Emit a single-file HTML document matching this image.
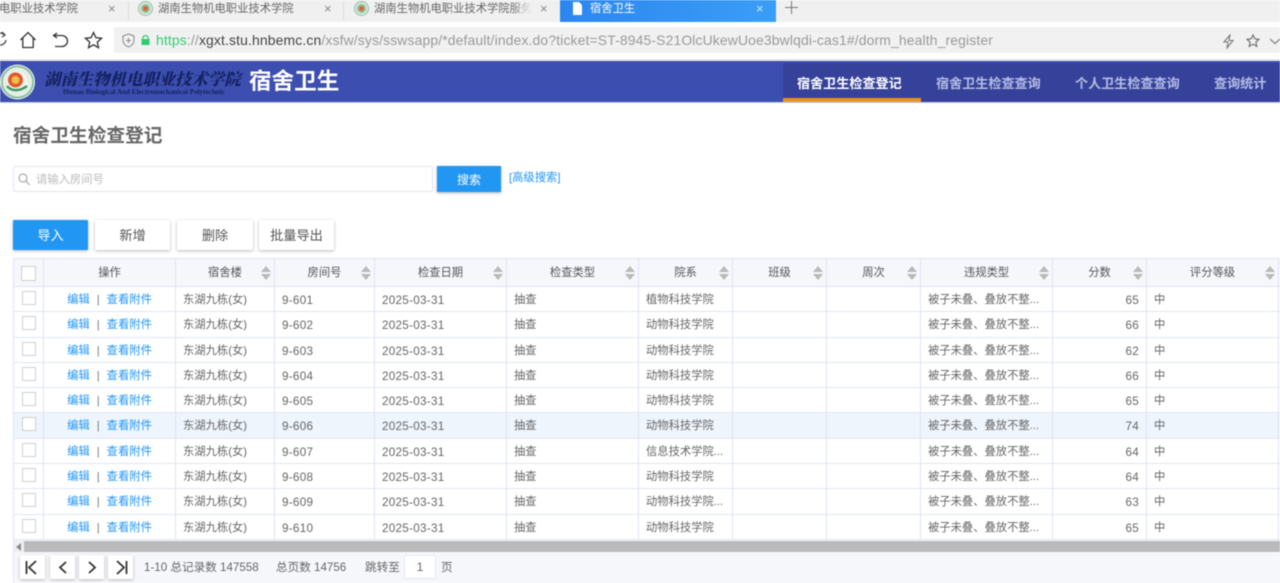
<!DOCTYPE html>
<html lang="zh"><head><meta charset="utf-8"><title>宿舍卫生</title>
<style>
*{box-sizing:border-box}
html,body{margin:0;padding:0;width:1280px;height:583px;overflow:hidden;background:#fff}
body{font-family:"Liberation Sans","Noto Sans CJK SC",sans-serif;color:#555;position:relative}
#w{position:absolute;left:0;top:0;width:1280px;height:583px;overflow:hidden;filter:blur(.4px)}
.a{position:absolute;white-space:nowrap}
.tabtxt{font-size:11.3px;color:#666;top:2px;line-height:14px}
.x{font-size:13px;color:#888;top:1px;line-height:15px}
.sep{width:1px;height:18px;top:2px;background:#dcdcdc}
.fav{width:15px;height:15px;top:1px;border-radius:50%;background:radial-gradient(circle,#e0603a 0 2px,#8cc5a5 3px 4px,#dbe8dc 5px 6px,#8fbf9f 7px)}
.nav{top:76px;font-size:13.1px;font-weight:700;color:#b4bde6;line-height:16px}
.btn{height:30px;top:220px;background:#fff;text-align:center;font-size:13.2px;line-height:31px;color:#555;box-shadow:0 1px 3px rgba(0,0,0,.28);border-radius:1px}
.row{position:absolute;left:13px;width:1267px;display:grid;grid-template-columns:31px 132px 99px 100px 132px 132px 94px 94px 94px 132px 94px 132px 1px;border-bottom:1px solid #e1e4f5;font-size:11.3px;color:#666}
.row>div{border-right:1px solid #dfe2f5;padding-left:7px;white-space:nowrap;overflow:hidden;line-height:25px}
.row>div:first-child{padding:0;position:relative;border-left:1px solid #dfe2f5}
.row>div:last-child{border:0;padding:0}
.row .n{text-align:right;padding:0 7px 0 0}
.row .d{font-size:11.7px;letter-spacing:.27px}
.row .o{text-align:center;padding:0;color:#2196f3}
.row .o i{font-style:normal;color:#777;margin:0 7px}
.cb{position:absolute;left:8px;top:4px;width:14px;height:14px;border:1px solid #cfcfcf;background:#fff}
.hd{top:258px;height:29px;border-top:1px solid #dfe2f5;background:#f6f7fb;color:#555;border-bottom:1px solid #dfe2f5}
.hd>div{text-align:center;padding:0;line-height:29px;position:relative}
.hd>div b{font-weight:400}
.sort:before{content:"";position:absolute;right:3px;top:7px;border:5px solid transparent;border-top:0;border-bottom:6px solid #b9b9b9}
.sort:after{content:"";position:absolute;right:3px;top:15px;border:5px solid transparent;border-bottom:0;border-top:6px solid #b9b9b9}
.pg{top:555px;width:25px;height:24px;background:#fff;box-shadow:0 1px 3px rgba(0,0,0,.25);border-radius:1px}
.pg svg{position:absolute;left:0;top:0}
.ft{top:560px;font-size:11.6px;line-height:16px;color:#666}
</style></head><body><div id="w">

<!-- tab strip -->
<div class="a" style="left:0;top:0;width:1280px;height:22px;background:#f0f0f0"></div>
<div class="a tabtxt" style="left:-1px">电职业技术学院</div><div class="a x" style="left:108px">×</div><div class="a sep" style="left:128px"></div>
<div class="a fav" style="left:138px"></div><div class="a tabtxt" style="left:158px">湖南生物机电职业技术学院</div><div class="a x" style="left:324px">×</div><div class="a sep" style="left:343px"></div>
<div class="a fav" style="left:354px"></div><div class="a tabtxt" style="left:374px;width:157px;overflow:hidden">湖南生物机电职业技术学院服务</div><div class="a" style="left:511px;top:0;width:21px;height:20px;background:linear-gradient(90deg,rgba(240,240,240,0),#f0f0f0)"></div><div class="a x" style="left:540px">×</div>
<div class="a" style="left:560px;top:0;width:216px;height:22px;background:linear-gradient(90deg,#2c86f0,#3a9ef6)"></div>
<svg class="a" style="left:572px;top:2px" width="11" height="13" viewBox="0 0 11 13"><path d="M1 0h6l3 3v10H1z" fill="#fff"/></svg>
<div class="a tabtxt" style="left:590px;color:#fff">宿舍卫生</div><div class="a x" style="left:756px;color:#cfe4fb">×</div>
<svg class="a" style="left:785px;top:1px" width="13" height="13" viewBox="0 0 13 13"><path d="M6.500 0v13M0 6.500h13" stroke="#777" stroke-width="1" fill="none"/></svg>

<!-- address row -->
<div class="a" style="left:0;top:22px;width:1280px;height:5px;background:#fff"></div>
<svg class="a" style="left:-7px;top:31px" width="14" height="16" viewBox="0 0 14 16"><path d="M11.500 4A6 6 0 1 0 13 9" fill="none" stroke="#444" stroke-width="1.300"/><path d="M9 1l3 3-3 2" fill="none" stroke="#444" stroke-width="1.300"/></svg>
<svg class="a" style="left:19px;top:31px" width="18" height="18" viewBox="0 0 18 18"><path d="M1.500 9L9 1.500 16.500 9M3.800 7v9.500h10.400V7" fill="none" stroke="#333" stroke-width="1.300"/></svg>
<svg class="a" style="left:52px;top:32px" width="18" height="16" viewBox="0 0 18 16"><path d="M5 1L1.500 3.500 5 6M1.500 3.500H10a5.500 5.500 0 0 1 0 11H3" fill="none" stroke="#333" stroke-width="1.300"/></svg>
<svg class="a" style="left:84px;top:31px" width="19" height="18" viewBox="0 0 19 18"><path d="M9.500 1.500l2.400 5.200 5.600.6-4.200 3.800 1.200 5.600-5-2.900-5 2.900 1.200-5.600-4.200-3.800 5.600-.6z" fill="none" stroke="#333" stroke-width="1.300"/></svg>
<div class="a" style="left:114px;top:27px;width:1166px;height:26px;background:#f1f1f1"></div>
<svg class="a" style="left:122px;top:33px" width="13" height="15" viewBox="0 0 13 15"><path d="M6.500 1L12 3v4.500c0 3-2.500 5.300-5.500 6.500C3.500 12.800 1 10.500 1 7.500V3z" fill="none" stroke="#888" stroke-width="1"/><path d="M6.500 5v5M4 7.500h5" stroke="#888" stroke-width="1"/></svg>
<svg class="a" style="left:141px;top:35px" width="9" height="10" viewBox="0 0 9 10"><path d="M2 4V3a2.500 2.500 0 0 1 5 0v1" fill="none" stroke="#2ecc71" stroke-width="1.200"/><rect x="0.500" y="4" width="8" height="6" fill="#2ecc71"/></svg>
<div class="a" style="left:156px;top:32px;font-size:13.9px;line-height:17px;color:#999;letter-spacing:.153px"><span style="color:#2ecc71">https</span>://<span style="color:#444">xgxt.stu.hnbemc.cn</span>/xsfw/sys/sswsapp/*default/index.do?ticket=ST-8945-S21OlcUkewUoe3bwlqdi-cas1#/dorm_health_register</div>
<svg class="a" style="left:1222px;top:34px" width="13" height="15" viewBox="0 0 13 15"><path d="M8 1L2 8h4l-1 6 6-7.500H7z" fill="none" stroke="#777" stroke-width="1.100"/></svg>
<svg class="a" style="left:1246px;top:34px" width="14" height="14" viewBox="0 0 14 14"><path d="M7 1l1.800 3.800 4.200.5-3.100 2.800.9 4.200L7 10.200l-3.800 2.100.9-4.200L1 5.300l4.200-.5z" fill="none" stroke="#666" stroke-width="1.100"/></svg>
<svg class="a" style="left:1270px;top:38px" width="10" height="7" viewBox="0 0 10 7"><path d="M0 1l5 4.500L10 1" fill="none" stroke="#777" stroke-width="1.100"/></svg>
<div class="a" style="left:0;top:59px;width:1280px;height:2px;background:#e6e6e6"></div>

<!-- app header -->
<div class="a" style="left:0;top:61px;width:1280px;height:41px;background:#3c4fb1"></div>
<div class="a" style="left:783px;top:63px;width:497px;height:39px;background:#364299"></div>
<div class="a" style="left:783px;top:98px;width:138px;height:4px;background:#e8951f"></div>
<div class="a" style="left:0;top:102px;width:1280px;height:1px;background:#c5cbe9"></div>
<svg class="a" style="left:0;top:64px" width="36" height="36" viewBox="0 0 36 36"><circle cx="17.500" cy="18" r="17.500" fill="#e4efe6"/><circle cx="17.500" cy="18" r="15.500" fill="none" stroke="#7fb596" stroke-width="1.500"/><circle cx="17.500" cy="18" r="10" fill="#f4f6ee"/><circle cx="15.500" cy="16" r="7.500" fill="#e2572f"/><circle cx="15.500" cy="16" r="4" fill="#e9c24a"/><path d="M7 22c4 5 12 6 20 0" fill="none" stroke="#3f9b63" stroke-width="2.500"/></svg>
<div class="a" style="left:44px;top:68px;font-family:'Noto Serif CJK SC',serif;font-weight:900;font-style:italic;font-size:16.400px;line-height:20px;color:#14225f">湖南生物机电职业技术学院</div>
<div class="a" style="left:63px;top:88px;font-family:'Liberation Serif',serif;font-weight:700;font-size:7.100px;line-height:8px;color:#14225f">Hunan Biological And Electromechanical Polytechnic</div>
<div class="a" style="left:249px;top:67px;font-size:22.600px;font-weight:700;line-height:29px;color:#fff">宿舍卫生</div>
<div class="a nav" style="left:797px;color:#fff">宿舍卫生检查登记</div>
<div class="a nav" style="left:936px">宿舍卫生检查查询</div>
<div class="a nav" style="left:1075px">个人卫生检查查询</div>
<div class="a nav" style="left:1214px">查询统计</div>

<!-- page title + search -->
<div class="a" style="left:13px;top:123px;font-size:18.700px;font-weight:700;line-height:26px;color:#666">宿舍卫生检查登记</div>
<div class="a" style="left:13px;top:166px;width:420px;height:26px;border:1px solid #e0e3f5;border-radius:2px;background:#fff"></div>
<svg class="a" style="left:18px;top:173px" width="12" height="13" viewBox="0 0 12 13"><circle cx="5" cy="5" r="4" fill="none" stroke="#aaa" stroke-width="1.200"/><path d="M8 8l3.500 4" stroke="#aaa" stroke-width="1.300"/></svg>
<div class="a" style="left:36px;top:173px;font-size:11.300px;line-height:15px;color:#bbb">请输入房间号</div>
<div class="a" style="left:437px;top:166px;width:64px;height:26px;background:#2196f3;color:#fff;font-size:12px;line-height:29px;text-align:center;box-shadow:0 1px 3px rgba(0,0,0,.3)">搜索</div>
<div class="a" style="left:509px;top:171px;font-size:11.300px;line-height:15px;color:#2196f3">[高级搜索]</div>

<!-- buttons -->
<div class="a btn" style="left:13px;width:75px;background:#2196f3;color:#fff">导入</div>
<div class="a btn" style="left:95px;width:75px">新增</div>
<div class="a btn" style="left:177px;width:76px">删除</div>
<div class="a btn" style="left:259px;width:75px">批量导出</div>

<!-- table -->
<div class="row hd"><div><span class="cb" style="top:7px;left:7px;width:15px;height:15px"></span></div><div><b>操作</b></div><div class="sort"><b>宿舍楼</b></div><div class="sort"><b>房间号</b></div><div class="sort"><b>检查日期</b></div><div class="sort"><b>检查类型</b></div><div class="sort"><b>院系</b></div><div class="sort"><b>班级</b></div><div class="sort"><b>周次</b></div><div class="sort"><b>违规类型</b></div><div class="sort"><b>分数</b></div><div class="sort"><b>评分等级</b></div><div></div></div>

<div class="row" style="top:287px;height:25px;line-height:27px"><div><span class="cb"></span></div><div class="o" style="line-height:27px">编辑<i>|</i>查看附件</div><div style="line-height:27px">东湖九栋(女)</div><div class="d" style="line-height:27px">9-601</div><div class="d" style="line-height:27px">2025-03-31</div><div style="line-height:27px">抽查</div><div style="line-height:27px">植物科技学院</div><div></div><div></div><div style="line-height:27px">被子未叠、叠放不整...</div><div class="n d" style="line-height:27px">65</div><div style="line-height:27px">中</div><div></div></div>
<div class="row" style="top:312px;height:26px"><div><span class="cb"></span></div><div class="o" style="line-height:27px">编辑<i>|</i>查看附件</div><div style="line-height:27px">东湖九栋(女)</div><div class="d" style="line-height:27px">9-602</div><div class="d" style="line-height:27px">2025-03-31</div><div style="line-height:27px">抽查</div><div style="line-height:27px">动物科技学院</div><div></div><div></div><div style="line-height:27px">被子未叠、叠放不整...</div><div class="n d" style="line-height:27px">66</div><div style="line-height:27px">中</div><div></div></div>
<div class="row" style="top:338px;height:25px"><div><span class="cb"></span></div><div class="o" style="line-height:27px">编辑<i>|</i>查看附件</div><div style="line-height:27px">东湖九栋(女)</div><div class="d" style="line-height:27px">9-603</div><div class="d" style="line-height:27px">2025-03-31</div><div style="line-height:27px">抽查</div><div style="line-height:27px">动物科技学院</div><div></div><div></div><div style="line-height:27px">被子未叠、叠放不整...</div><div class="n d" style="line-height:27px">62</div><div style="line-height:27px">中</div><div></div></div>
<div class="row" style="top:363px;height:25px"><div><span class="cb"></span></div><div class="o" style="line-height:27px">编辑<i>|</i>查看附件</div><div style="line-height:27px">东湖九栋(女)</div><div class="d" style="line-height:27px">9-604</div><div class="d" style="line-height:27px">2025-03-31</div><div style="line-height:27px">抽查</div><div style="line-height:27px">动物科技学院</div><div></div><div></div><div style="line-height:27px">被子未叠、叠放不整...</div><div class="n d" style="line-height:27px">66</div><div style="line-height:27px">中</div><div></div></div>
<div class="row" style="top:388px;height:25px"><div><span class="cb"></span></div><div class="o" style="line-height:27px">编辑<i>|</i>查看附件</div><div style="line-height:27px">东湖九栋(女)</div><div class="d" style="line-height:27px">9-605</div><div class="d" style="line-height:27px">2025-03-31</div><div style="line-height:27px">抽查</div><div style="line-height:27px">动物科技学院</div><div></div><div></div><div style="line-height:27px">被子未叠、叠放不整...</div><div class="n d" style="line-height:27px">65</div><div style="line-height:27px">中</div><div></div></div>
<div class="row" style="top:413px;height:26px;background:#eef5fd"><div><span class="cb"></span></div><div class="o" style="line-height:27px">编辑<i>|</i>查看附件</div><div style="line-height:27px">东湖九栋(女)</div><div class="d" style="line-height:27px">9-606</div><div class="d" style="line-height:27px">2025-03-31</div><div style="line-height:27px">抽查</div><div style="line-height:27px">动物科技学院</div><div></div><div></div><div style="line-height:27px">被子未叠、叠放不整...</div><div class="n d" style="line-height:27px">74</div><div style="line-height:27px">中</div><div></div></div>
<div class="row" style="top:439px;height:25px"><div><span class="cb"></span></div><div class="o" style="line-height:27px">编辑<i>|</i>查看附件</div><div style="line-height:27px">东湖九栋(女)</div><div class="d" style="line-height:27px">9-607</div><div class="d" style="line-height:27px">2025-03-31</div><div style="line-height:27px">抽查</div><div style="line-height:27px">信息技术学院...</div><div></div><div></div><div style="line-height:27px">被子未叠、叠放不整...</div><div class="n d" style="line-height:27px">64</div><div style="line-height:27px">中</div><div></div></div>
<div class="row" style="top:464px;height:25px"><div><span class="cb"></span></div><div class="o" style="line-height:27px">编辑<i>|</i>查看附件</div><div style="line-height:27px">东湖九栋(女)</div><div class="d" style="line-height:27px">9-608</div><div class="d" style="line-height:27px">2025-03-31</div><div style="line-height:27px">抽查</div><div style="line-height:27px">动物科技学院</div><div></div><div></div><div style="line-height:27px">被子未叠、叠放不整...</div><div class="n d" style="line-height:27px">64</div><div style="line-height:27px">中</div><div></div></div>
<div class="row" style="top:489px;height:26px"><div><span class="cb"></span></div><div class="o" style="line-height:27px">编辑<i>|</i>查看附件</div><div style="line-height:27px">东湖九栋(女)</div><div class="d" style="line-height:27px">9-609</div><div class="d" style="line-height:27px">2025-03-31</div><div style="line-height:27px">抽查</div><div style="line-height:27px">动物科技学院...</div><div></div><div></div><div style="line-height:27px">被子未叠、叠放不整...</div><div class="n d" style="line-height:27px">63</div><div style="line-height:27px">中</div><div></div></div>
<div class="row" style="top:515px;height:25px"><div><span class="cb"></span></div><div class="o" style="line-height:27px">编辑<i>|</i>查看附件</div><div style="line-height:27px">东湖九栋(女)</div><div class="d" style="line-height:27px">9-610</div><div class="d" style="line-height:27px">2025-03-31</div><div style="line-height:27px">抽查</div><div style="line-height:27px">动物科技学院</div><div></div><div></div><div style="line-height:27px">被子未叠、叠放不整...</div><div class="n d" style="line-height:27px">65</div><div style="line-height:27px">中</div><div></div></div>

<!-- footer + scrollbar -->
<div class="a" style="left:13px;top:540px;width:1267px;height:43px;background:#f6f7fb;border-left:1px solid #e1e4f5"></div>
<div class="a" style="left:14px;top:541px;width:1266px;height:11px;background:#f0f0f0"></div>
<div class="a" style="left:24px;top:541px;width:1256px;height:11px;background:#bababa"></div>
<svg class="a" style="left:16px;top:543px" width="6" height="8" viewBox="0 0 6 8"><path d="M5 0v8L0 4z" fill="#888"/></svg>
<div class="a pg" style="left:20px"><svg width="25" height="24" viewBox="0 0 25 24"><path d="M6.500 6v13" stroke="#333" stroke-width="1.800"/><path d="M16 6l-7 6.500 7 6.500" fill="none" stroke="#333" stroke-width="1.800"/></svg></div>
<div class="a pg" style="left:50px"><svg width="25" height="24" viewBox="0 0 25 24"><path d="M16 7l-6 5.500 6 5.500" fill="none" stroke="#333" stroke-width="1.800"/></svg></div>
<div class="a pg" style="left:79px"><svg width="25" height="24" viewBox="0 0 25 24"><path d="M10 7l6 5.500-6 5.500" fill="none" stroke="#333" stroke-width="1.800"/></svg></div>
<div class="a pg" style="left:108px"><svg width="25" height="24" viewBox="0 0 25 24"><path d="M9 6l7 6.500-7 6.500" fill="none" stroke="#333" stroke-width="1.800"/><path d="M18.500 6v13" stroke="#333" stroke-width="1.800"/></svg></div>
<div class="a ft" style="left:144px">1-10 总记录数 147558</div>
<div class="a ft" style="left:276px">总页数 14756</div>
<div class="a ft" style="left:365px">跳转至</div>
<div class="a" style="left:404px;top:555px;width:32px;height:24px;background:#fff;border:1px solid #e6e8f5;border-radius:2px;font-size:12px;line-height:23px;text-align:center;color:#666">1</div>
<div class="a ft" style="left:441px">页</div>
</div></body></html>
